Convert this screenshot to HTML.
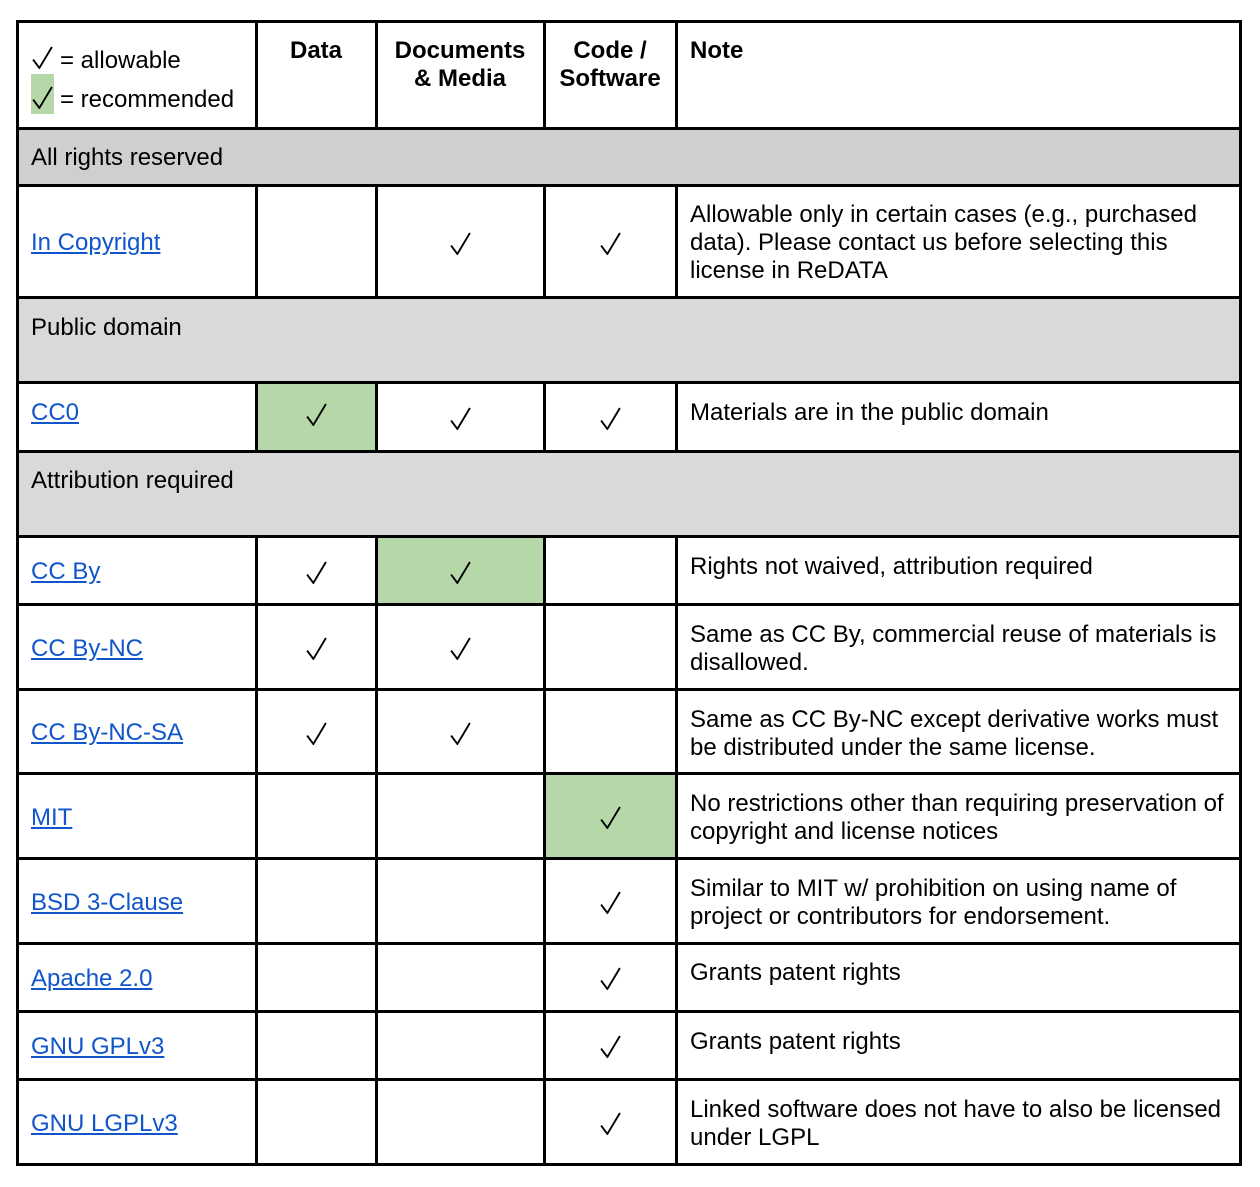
<!DOCTYPE html>
<html><head><meta charset="utf-8"><style>
body{margin:0;width:1260px;height:1187px;background:#fff;position:relative;font-family:"Liberation Sans",Arial,sans-serif;font-size:24px;color:#000;overflow:hidden}
.h{position:absolute;height:3px;background:#000}
.v{position:absolute;width:3px;background:#000}
.g{position:absolute;background:#d9d9d9}
.gr{position:absolute;background:#b6d7a8}
.t{position:absolute;line-height:28px;white-space:nowrap;margin-top:1px}
.l{color:#1155cc;text-decoration:underline}
.b{font-weight:bold;text-align:center}
svg.c{position:absolute;width:21px;height:23px}
</style></head><body>
<div class="g" style="left:16px;top:128px;width:1225px;height:57px;background:#d0cece"></div>
<div class="g" style="left:16px;top:297px;width:1225px;height:85px"></div>
<div class="g" style="left:16px;top:451px;width:1225px;height:85px"></div>
<div class="gr" style="left:256px;top:382px;width:120px;height:69px"></div>
<div class="gr" style="left:376px;top:536px;width:168px;height:68px"></div>
<div class="gr" style="left:544px;top:773px;width:132px;height:85px"></div>
<div class="gr" style="left:31px;top:74px;width:23px;height:40px"></div>

<div class="h" style="left:16px;top:20px;width:1226px"></div>
<div class="h" style="left:16px;top:127px;width:1226px"></div>
<div class="h" style="left:16px;top:184px;width:1226px"></div>
<div class="h" style="left:16px;top:296px;width:1226px"></div>
<div class="h" style="left:16px;top:381px;width:1226px"></div>
<div class="h" style="left:16px;top:450px;width:1226px"></div>
<div class="h" style="left:16px;top:535px;width:1226px"></div>
<div class="h" style="left:16px;top:603px;width:1226px"></div>
<div class="h" style="left:16px;top:688px;width:1226px"></div>
<div class="h" style="left:16px;top:772px;width:1226px"></div>
<div class="h" style="left:16px;top:857px;width:1226px"></div>
<div class="h" style="left:16px;top:942px;width:1226px"></div>
<div class="h" style="left:16px;top:1010px;width:1226px"></div>
<div class="h" style="left:16px;top:1078px;width:1226px"></div>
<div class="h" style="left:16px;top:1163px;width:1226px"></div>

<div class="v" style="left:16px;top:20px;height:1146px"></div>
<div class="v" style="left:1239px;top:20px;height:1146px"></div>
<div class="v" style="left:255px;top:20px;height:110px"></div>
<div class="v" style="left:375px;top:20px;height:110px"></div>
<div class="v" style="left:543px;top:20px;height:110px"></div>
<div class="v" style="left:675px;top:20px;height:110px"></div>
<div class="v" style="left:255px;top:184px;height:115px"></div>
<div class="v" style="left:375px;top:184px;height:115px"></div>
<div class="v" style="left:543px;top:184px;height:115px"></div>
<div class="v" style="left:675px;top:184px;height:115px"></div>
<div class="v" style="left:255px;top:381px;height:72px"></div>
<div class="v" style="left:375px;top:381px;height:72px"></div>
<div class="v" style="left:543px;top:381px;height:72px"></div>
<div class="v" style="left:675px;top:381px;height:72px"></div>
<div class="v" style="left:255px;top:535px;height:631px"></div>
<div class="v" style="left:375px;top:535px;height:631px"></div>
<div class="v" style="left:543px;top:535px;height:631px"></div>
<div class="v" style="left:675px;top:535px;height:631px"></div>

<svg width="0" height="0" style="position:absolute"><defs><symbol id="k" viewBox="0 0 20 22"><path d="M1 13 L7 21 L19 1" fill="none" stroke="#000" stroke-width="1.8"/></symbol></defs></svg>

<div class="t" style="left:31px;top:46px"><span style="display:inline-block;width:29px"></span>= allowable</div>
<div class="t" style="left:31px;top:85px"><span style="display:inline-block;width:29px"></span>= recommended</div>
<svg class="c" style="left:32px;top:46px"><use href="#k"/></svg>
<svg class="c" style="left:32px;top:86px"><use href="#k"/></svg>

<div class="t b" style="left:256px;top:36px;width:120px">Data</div>
<div class="t b" style="left:376px;top:36px;width:168px">Documents<br>&amp; Media</div>
<div class="t b" style="left:544px;top:36px;width:132px">Code /<br>Software</div>
<div class="t b" style="left:690px;top:36px;text-align:left">Note</div>

<div class="t" style="left:31px;top:143px">All rights reserved</div>
<div class="t" style="left:31px;top:313px">Public domain</div>
<div class="t" style="left:31px;top:466px">Attribution required</div>

<div class="t l" style="left:31px;top:228px">In Copyright</div>
<div class="t" style="left:690px;top:200px">Allowable only in certain cases (e.g., purchased<br>data). Please contact us before selecting this<br>license in ReDATA</div>

<div class="t l" style="left:31px;top:398px">CC0</div>
<div class="t" style="left:690px;top:398px">Materials are in the public domain</div>

<div class="t l" style="left:31px;top:557px">CC By</div>
<div class="t" style="left:690px;top:552px">Rights not waived, attribution required</div>

<div class="t l" style="left:31px;top:634px">CC By-NC</div>
<div class="t" style="left:690px;top:620px">Same as CC By, commercial reuse of materials is<br>disallowed.</div>

<div class="t l" style="left:31px;top:718px">CC By-NC-SA</div>
<div class="t" style="left:690px;top:705px">Same as CC By-NC except derivative works must<br>be distributed under the same license.</div>

<div class="t l" style="left:31px;top:803px">MIT</div>
<div class="t" style="left:690px;top:789px">No restrictions other than requiring preservation of<br>copyright and license notices</div>

<div class="t l" style="left:31px;top:888px">BSD 3-Clause</div>
<div class="t" style="left:690px;top:874px">Similar to MIT w/ prohibition on using name of<br>project or contributors for endorsement.</div>

<div class="t l" style="left:31px;top:964px">Apache 2.0</div>
<div class="t" style="left:690px;top:958px">Grants patent rights</div>

<div class="t l" style="left:31px;top:1032px">GNU GPLv3</div>
<div class="t" style="left:690px;top:1027px">Grants patent rights</div>

<div class="t l" style="left:31px;top:1109px">GNU LGPLv3</div>
<div class="t" style="left:690px;top:1095px">Linked software does not have to also be licensed<br>under LGPL</div>

<svg class="c" style="left:450px;top:232px"><use href="#k"/></svg>
<svg class="c" style="left:600px;top:232px"><use href="#k"/></svg>
<svg class="c" style="left:306px;top:403px"><use href="#k"/></svg>
<svg class="c" style="left:450px;top:407px"><use href="#k"/></svg>
<svg class="c" style="left:600px;top:407px"><use href="#k"/></svg>
<svg class="c" style="left:306px;top:561px"><use href="#k"/></svg>
<svg class="c" style="left:450px;top:561px"><use href="#k"/></svg>
<svg class="c" style="left:306px;top:637px"><use href="#k"/></svg>
<svg class="c" style="left:450px;top:637px"><use href="#k"/></svg>
<svg class="c" style="left:306px;top:722px"><use href="#k"/></svg>
<svg class="c" style="left:450px;top:722px"><use href="#k"/></svg>
<svg class="c" style="left:600px;top:806px"><use href="#k"/></svg>
<svg class="c" style="left:600px;top:891px"><use href="#k"/></svg>
<svg class="c" style="left:600px;top:967px"><use href="#k"/></svg>
<svg class="c" style="left:600px;top:1035px"><use href="#k"/></svg>
<svg class="c" style="left:600px;top:1112px"><use href="#k"/></svg>
</body></html>
